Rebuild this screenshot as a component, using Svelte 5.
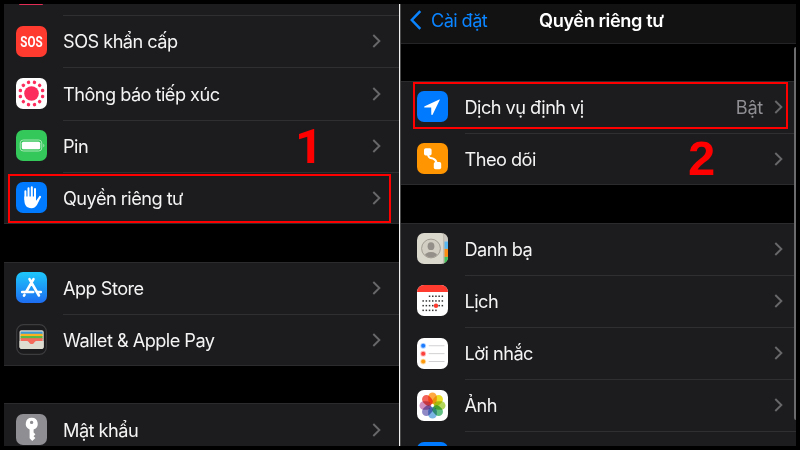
<script lang="ts">
  type Item = {
    icon: string
    label: string
    value?: string
  }

  const settings: Item[][] = [
    [
      { icon: 'sos', label: 'SOS khẩn cấp' },
      { icon: 'exposure', label: 'Thông báo tiếp xúc' },
      { icon: 'battery', label: 'Pin' },
      { icon: 'hand', label: 'Quyền riêng tư' },
    ],
    [
      { icon: 'appstore', label: 'App Store' },
      { icon: 'wallet', label: 'Wallet & Apple Pay' },
    ],
    [{ icon: 'key', label: 'Mật khẩu' }],
  ]

  const privacy: Item[][] = [
    [
      { icon: 'location', label: 'Dịch vụ định vị', value: 'Bật' },
      { icon: 'tracking', label: 'Theo dõi' },
    ],
    [
      { icon: 'contacts', label: 'Danh bạ' },
      { icon: 'calendar', label: 'Lịch' },
      { icon: 'reminders', label: 'Lời nhắc' },
      { icon: 'photos', label: 'Ảnh' },
      { icon: 'bluetooth', label: '' },
    ],
  ]

  const petals = ['#ff9a1f', '#e8d800', '#a5cf3c', '#45b56c', '#62a8e0', '#7d75bd', '#c77cb4', '#f0463a']

  // dots per calendar week: first column, count
  const weeks = [
    [2, 5],
    [0, 7],
    [0, 7],
    [0, 5],
  ]
</script>

{#snippet glyph(name: string)}
  <svg class="icon" viewBox="0 0 31 31">
    {#if name === 'sos'}
      <rect width="31" height="31" rx="7" fill="#ff3b30" />
      <text class="sos" text-anchor="middle" transform="translate(15.5 20.8) scale(.8 1)">SOS</text>
    {:else if name === 'exposure'}
      <rect width="31" height="31" rx="7" fill="#fff" />
      <circle cx="15.5" cy="15.5" r="7.3" fill="#fc2d5c" />
      {#each Array(12) as _, i}
        <circle cx="15.5" cy="4" r="1.75" fill="#fc2d5c" transform="rotate({i * 30 + 15} 15.5 15.5)" />
      {/each}
    {:else if name === 'battery'}
      <rect width="31" height="31" rx="7" fill="#34c759" />
      <rect x="4.2" y="10" width="21.6" height="11" rx="3" fill="none" stroke="#a5e6b5" stroke-width="1" />
      <rect x="5.8" y="11.7" width="18.4" height="7.6" rx="1.5" fill="#fff" />
      <path d="M27.3 13.7v3.6c1.4-.5 1.4-3.1 0-3.6z" fill="#a5e6b5" />
    {:else if name === 'hand'}
      <rect width="31" height="31" rx="7" fill="#007aff" />
      <g fill="none" stroke="#fff" stroke-width="2" stroke-linecap="round">
        <path d="M9.4 17.5V9.2M12.5 16V6.2M15.8 16V5.3M19 16V7" />
        <path d="M20.3 20.5l3.7-5.5" stroke-width="2.2" />
      </g>
      <path d="M8.4 14.5H20v4.8l2-2.2 1.5.7c-2 4-3.1 8.4-8 8.4-5 0-7.1-3.3-7.1-7.7z" fill="#fff" />
    {:else if name === 'appstore'}
      <defs>
        <linearGradient id="store" x2="0" y2="1">
          <stop stop-color="#1dc8fb" />
          <stop offset="1" stop-color="#1d6df2" />
        </linearGradient>
      </defs>
      <rect width="31" height="31" rx="7" fill="url(#store)" />
      <g fill="none" stroke="#fff" stroke-width="2.6" stroke-linecap="round">
        <path d="M17.5 7.2L10.1 20M13.5 7.2L22.9 23.5M6.2 20h11M22.2 20h2.6M8.5 22.8l-.5.9" />
      </g>
    {:else if name === 'wallet'}
      <rect x=".7" y=".7" width="29.6" height="29.6" rx="6.8" fill="#1b1b1d" stroke="#3c3c3f" stroke-width="1.2" />
      <clipPath id="cards"><rect x="3.5" y="6.2" width="24.2" height="18.7" rx="1.8" /></clipPath>
      <g clip-path="url(#cards)">
        <rect x="3" y="6" width="26" height="20" fill="#dedbd1" />
        <rect x="4.6" y="7.6" width="22" height="3" fill="#3c9bd5" />
        <rect x="4.6" y="9.8" width="22" height="3" fill="#fbb022" />
        <rect x="4.6" y="12" width="22" height="3" fill="#59b947" />
        <rect x="4.6" y="14.2" width="22" height="3" fill="#f4695a" />
        <path d="M3 16.9h7.8l2.3 1.4c.7 1 1.5 1.4 2.6 1.4s1.9-.4 2.6-1.4l2.3-1.4H29V26H3z" fill="#dedbd1" />
        <path d="M10 16.8c1.9 0 2.4.7 3.1 1.6.7 1 1.5 1.6 2.6 1.6s1.9-.6 2.6-1.6c.7-.9 1.2-1.6 3.1-1.6z" fill="#f4695a" />
      </g>
    {:else if name === 'key'}
      <rect width="31" height="31" rx="7" fill="#8e8e93" />
      <path
        fill="#fff"
        fill-rule="evenodd"
        d="M15.6 3.8a6 6 0 0 0-2 11.6v8.9l2.6 2.8 3.2-3-1.8-1.9 1.8-1.9-1.8-1.9v-2.9a6 6 0 0 0-2-11.7zm0 2.9a1.7 1.7 0 1 1 0 3.4 1.7 1.7 0 0 1 0-3.4z"
      />
    {:else if name === 'location'}
      <rect width="31" height="31" rx="7" fill="#007aff" />
      <path d="M22.3 8.5L7.7 15.2c-.9.5-.7 1.2.2 1.3l6.3.1.1 6.7c0 1 .9 1.1 1.4.1l7-14.3c.3-.5.1-.8-.4-.6z" fill="#fff" />
    {:else if name === 'tracking'}
      <rect width="31" height="31" rx="7" fill="#ff9500" />
      <path d="M11 10.5c0 5.5 3.3 4.3 5.3 5.2 2.6 1 3.2 2.3 3.4 5.5" fill="none" stroke="#fff" stroke-width="2" />
      <rect x="7" y="5.2" width="7.6" height="7.2" rx="1.7" fill="#fff" />
      <rect x="16.8" y="19" width="7.4" height="7.2" rx="1.7" fill="#fff" />
    {:else if name === 'contacts'}
      <clipPath id="book"><rect width="31" height="31" rx="7" /></clipPath>
      <clipPath id="face"><circle cx="14" cy="15.5" r="8.9" /></clipPath>
      <g clip-path="url(#book)">
        <rect width="31" height="31" fill="#dad7cd" />
        <rect x="27.3" width="4" height="8.5" fill="#c9c7bf" />
        <rect x="27.3" y="8.5" width="4" height="7.4" fill="#59b8f0" />
        <rect x="27.3" y="15.9" width="4" height="8" fill="#fb8c14" />
        <rect x="27.3" y="23.9" width="4" height="8" fill="#3fc558" />
        <rect x="26.3" width="1" height="31" fill="#b5b1a6" />
      </g>
      <circle cx="14" cy="15.5" r="9.4" fill="#d2cec4" stroke="#9c968c" stroke-width=".9" />
      <g clip-path="url(#face)" fill="#948f88">
        <ellipse cx="14" cy="13.2" rx="3.4" ry="3.9" />
        <ellipse cx="14" cy="24" rx="6.8" ry="4.9" />
      </g>
    {:else if name === 'calendar'}
      <clipPath id="page"><rect width="31" height="31" rx="7" /></clipPath>
      <g clip-path="url(#page)">
        <rect width="31" height="31" fill="#fff" />
        <rect width="31" height="7" fill="#ff3b30" />
      </g>
      {#each weeks as [start, count], row}
        {#each Array(count) as _, i}
          <rect x={5.4 + (start + i) * 3.2} y={10.5 + row * 4.7} width="1.5" height="1.5" fill="#333" />
        {/each}
      {/each}
      <circle cx="19" cy="20.7" r="2.2" fill="#ff3b30" />
    {:else if name === 'reminders'}
      <rect width="31" height="31" rx="7" fill="#fff" />
      {#each ['#1b7cff', '#fc403b', '#fe9a0b'] as color, i}
        <circle cx="6.2" cy={7.8 + i * 7.9} r="2.9" fill={color} fill-opacity=".35" />
        <circle cx="6.2" cy={7.8 + i * 7.9} r="2" fill={color} />
        <rect x="11.7" y={7.4 + i * 7.9} width="15.8" height=".8" fill="#c6c6c8" />
      {/each}
    {:else if name === 'photos'}
      <rect width="31" height="31" rx="7" fill="#fff" />
      {#each petals as color, i}
        <rect class="petal" x="11.2" y="2.5" width="8.6" height="11.6" rx="4.3" fill={color} transform="rotate({i * 45} 15.5 15.5)" />
      {/each}
    {:else}
      <rect width="31" height="31" rx="7" fill="#007aff" />
    {/if}
  </svg>
{/snippet}

{#snippet list(groups: Item[][])}
  {#each groups as group}
    <ul class="group">
      {#each group as { icon, label, value }}
        <li class="row">
          {@render glyph(icon)}
          <div class="cell">
            <span class="label">{label}</span>
            {#if value}
              <span class="value">{value}</span>
            {/if}
            <svg class="chevron" viewBox="0 0 9 14">
              <path d="M1.3 1L7.4 7l-6.1 6" />
            </svg>
          </div>
        </li>
      {/each}
    </ul>
  {/each}
{/snippet}

<main class="frame">
  <section class="pane settings">
    <div class="previous"></div>
    {@render list(settings)}
    <div class="highlight first"></div>
    <strong class="step one">1</strong>
  </section>

  <section class="pane privacy">
    <header class="nav">
      <svg class="back" viewBox="0 0 12 20">
        <path d="M10.3 1.2L1.8 10l8.5 8.8" />
      </svg>
      <span class="back-label">Cài đặt</span>
      <h1 class="title">Quyền riêng tư</h1>
    </header>
    {@render list(privacy)}
    <div class="scrollbar"></div>
    <div class="highlight second"></div>
    <strong class="step two">2</strong>
  </section>
</main>

<style>
  :global(body) {
    background: #000;
  }

  .frame {
    box-sizing: border-box;
    display: grid;
    grid-template-columns: 396px 395px;
    column-gap: 1px;
    width: 800px;
    height: 450px;
    padding: 4px;
    overflow: hidden;
    background: #4a4a4b;
    border: solid #000;
    border-width: 4px;
    padding: 0;
    color: #f4f4f5;
    font-family: Inter, 'Liberation Sans', sans-serif;
    font-size: 18.2px;
  }

  .pane {
    position: relative;
    height: 442px;
    overflow: hidden;
    background: #000;
  }

  .settings {
    box-sizing: border-box;
    border-right: 1px solid #f0f0f0;
  }

  .previous {
    position: relative;
    height: 11.3px;
    background: #1c1c1e;
  }

  .previous::before {
    content: '';
    position: absolute;
    left: 15px;
    top: 0;
    width: 24px;
    height: 1px;
    border-radius: 0 0 4px 4px;
    background: #e12c55;
  }

  .group {
    margin: 0 0 37.5px;
    padding: 0;
    list-style: none;
    background: #1c1c1e;
    box-shadow: inset 0 1px #2b2b2d, inset 0 -1px #2b2b2d;
  }

  .settings .group:first-of-type {
    box-shadow: inset 0 -1px #2b2b2d;
  }

  .row {
    display: flex;
    align-items: center;
    gap: 16px;
    height: 52.2px;
    padding-left: 12px;
  }

  .privacy .row {
    gap: 16.5px;
    padding-left: 16px;
  }

  .icon {
    flex: none;
    width: 31px;
    height: 31px;
  }

  .sos {
    fill: #fff;
    font-family: Roboto, sans-serif;
    font-size: 14.5px;
    font-weight: 700;
  }

  .petal {
    mix-blend-mode: multiply;
    opacity: 0.85;
  }

  .cell {
    box-sizing: border-box;
    display: flex;
    flex: 1;
    align-items: center;
    height: 100%;
    padding-right: 18px;
    box-shadow: inset 0 1px #2f2f31;
  }

  .privacy .cell {
    padding-right: 13px;
  }

  .group:not(:first-of-type) .row:first-child .cell,
  .privacy .row:first-child .cell {
    box-shadow: none;
  }

  .label {
    flex: 1;
    letter-spacing: -0.54px;
    white-space: nowrap;
  }

  .value {
    margin-right: 11px;
    color: #8e8e93;
    letter-spacing: -0.3px;
  }

  .chevron {
    width: 9px;
    height: 14px;
  }

  .chevron path {
    fill: none;
    stroke: #68686b;
    stroke-width: 1.9;
  }

  .nav {
    box-sizing: border-box;
    display: flex;
    align-items: center;
    height: 40px;
    margin-bottom: 36.7px;
    padding: 0 0 7px 9px;
    border-bottom: 1px solid #242426;
    background: #121213;
  }

  .back {
    width: 12px;
    height: 20px;
  }

  .back path {
    fill: none;
    stroke: #0a84ff;
    stroke-width: 2.5;
  }

  .back-label {
    width: 108px;
    margin-left: 9px;
    color: #0a84ff;
    letter-spacing: -0.6px;
  }

  .title {
    margin: 0;
    color: #fff;
    font-size: 18.2px;
    font-weight: 600;
    letter-spacing: -0.4px;
  }

  .scrollbar {
    position: absolute;
    top: 43px;
    right: 0;
    width: 2.5px;
    height: 373px;
    border-radius: 2px 0 0 2px;
    background: #6b6b6d;
  }

  .highlight {
    position: absolute;
    box-sizing: border-box;
    border: 2px solid #fe0000;
  }

  .first {
    left: 4px;
    top: 170px;
    width: 383px;
    height: 49px;
  }

  .second {
    left: 12px;
    top: 78px;
    width: 375px;
    height: 47px;
  }

  .step {
    position: absolute;
    color: #fe0000;
    font: bold 49px/50px Roboto, sans-serif;
  }

  .one {
    left: 291px;
    top: 118px;
  }

  .two {
    left: 287px;
    top: 129px;
    font-family: 'Liberation Sans', Arial, sans-serif;
  }
</style>
